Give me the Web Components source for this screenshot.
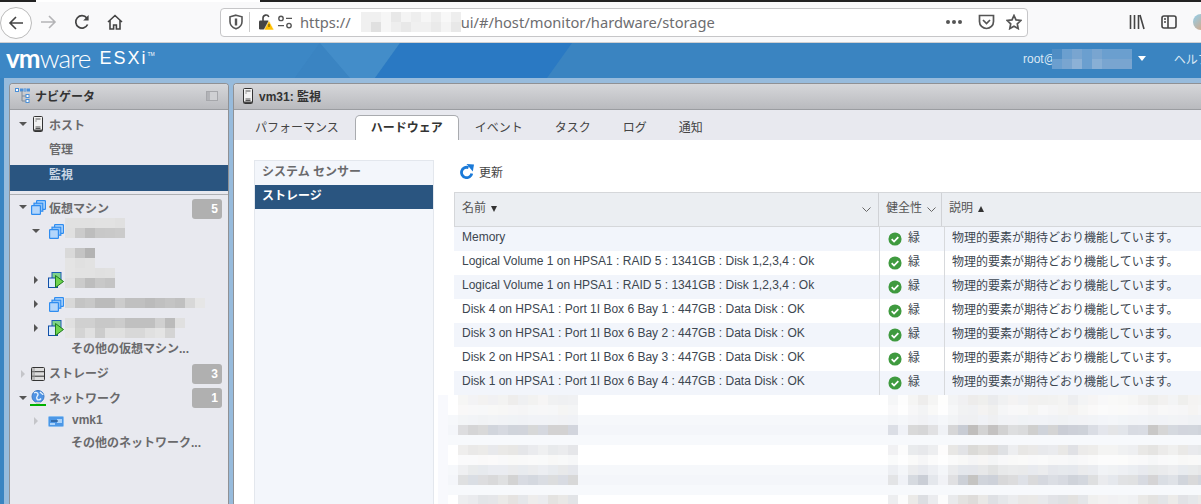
<!DOCTYPE html>
<html lang="ja"><head><meta charset="utf-8"><title>ESXi</title>
<style>
html,body{margin:0;padding:0;width:1201px;height:504px;overflow:hidden;background:#97bbdc;font-family:"Liberation Sans","Noto Sans CJK JP",sans-serif;font-size:12px}
</style></head><body>
<esxi-app></esxi-app>
<script>
const ICONS={
back:'<svg viewBox="0 0 16 16" width="16" height="16" fill="none" stroke="#444" stroke-width="1.6"><path d="M15 8H2M8 2L2 8l6 6"/></svg>',
forward:'<svg viewBox="0 0 16 16" width="16" height="16" fill="none" stroke="#b4b4b6" stroke-width="1.6"><path d="M0 8h14M8 2l6 6-6 6"/></svg>',
reload:'<svg viewBox="0 0 16 16" width="16" height="16" fill="none" stroke="#444" stroke-width="1.7"><path d="M13.6 10.5A6.2 6.2 0 1 1 12.8 4"/><path d="M14.6 1v5.4H9.2z" fill="#444" stroke="none"/></svg>',
home:'<svg viewBox="0 0 16 16" width="16" height="16" fill="none" stroke="#444" stroke-width="1.6"><path d="M1 8l7-6.5L15 8M3 6.5V15h3.6v-4h2.8v4H13V6.5"/></svg>',
shield:'<svg viewBox="0 0 16 16" width="16" height="16" fill="none" stroke="#555" stroke-width="1.6"><path d="M8 1.2l6 1.6v5c0 3.4-2.6 5.8-6 7-3.4-1.2-6-3.6-6-7v-5z"/><path d="M8 4.5v7" stroke-width="2.4"/></svg>',
lock:'<svg viewBox="0 0 16 18" width="16" height="18"><path d="M5 8V5a3 3 0 0 1 5.8-1" fill="none" stroke="#444" stroke-width="1.6"/><rect x="1" y="7.5" width="10" height="9" rx="1.2" fill="#444"/><path d="M11 7.5l5 9.5H6z" fill="#ffbf00" stroke="#fff" stroke-width=".6"/><path d="M11 11v3" stroke="#5a4500" stroke-width="1"/></svg>',
perm:'<svg viewBox="0 0 16 16" width="16" height="16" fill="none" stroke="#555" stroke-width="1.4"><circle cx="4" cy="4.4" r="2.2"/><path d="M9 4.4h6M1 11.6h6"/><circle cx="12" cy="11.6" r="2.2"/></svg>',
pocket:'<svg viewBox="0 0 17 16" width="17" height="16" fill="none" stroke="#555" stroke-width="1.7"><path d="M1.5 1.5h14v6a7 7 0 0 1-14 0z"/><path d="M5 6l3.5 3.5L12 6"/></svg>',
star:'<svg viewBox="0 0 16 16" width="16" height="16" fill="none" stroke="#555" stroke-width="1.7"><path d="M8 1.5l2 4.4 4.8.6-3.5 3.3.9 4.8L8 12.2l-4.200 2.400.9-4.800L1.200 6.500 6 5.900z"/></svg>',
library:'<svg viewBox="0 0 16 16" width="16" height="16" fill="none" stroke="#444" stroke-width="1.6"><path d="M1.500 1v14M5.500 1v14M9.500 1v14M11 1l4 14"/></svg>',
sidebar:'<svg viewBox="0 0 16 16" width="16" height="16" fill="none" stroke="#444" stroke-width="1.6"><rect x="1" y="2" width="14" height="12" rx="2"/><path d="M7 2v12M3 5h2M3 8h2"/></svg>',
tree:'<svg viewBox="0 0 16 16" width="16" height="16" fill="#fff" stroke="#4a90d9" stroke-width="1"><rect x=".5" y=".5" width="3" height="3"/><rect x="5.500" y="1" width="2" height="2"/><rect x="9" y="1" width="2" height="2"/><rect x="12.500" y="1" width="2" height="2"/><path d="M7 3v10h4M7 8h4" fill="none" stroke="#7d8a99"/><rect x="11" y="6.500" width="3" height="3"/><rect x="11" y="11.500" width="3" height="3"/></svg>',
collapse:'<svg viewBox="0 0 12 10" width="12" height="10"><rect x=".5" y=".5" width="11" height="9" fill="#cfd0d3" stroke="#a6a7ab"/><rect x="1" y="1" width="3" height="8" fill="#b2b3b7"/></svg>',
server:'<svg viewBox="0 0 10 16" width="10" height="16"><rect x=".5" y=".5" width="9" height="15" rx="1" fill="#f1f1f1" stroke="#333"/><path d="M2.500 3h5M2.500 5h1M2.500 11h5M2.500 12.500h5" stroke="#555"/><rect x="1" y="13.500" width="8" height="1.500" fill="#444"/></svg>',
vm:'<svg viewBox="0 0 15 15" width="15" height="15"><rect x="5.600" y=".6" width="8.800" height="8.800" rx=".6" fill="#b9dafc" stroke="#2f8df0" stroke-width="1.200"/><rect x="3" y="3.200" width="8.800" height="8" fill="#8fc3f8" stroke="#2f8df0" stroke-width="1.200"/><rect x=".6" y="5.600" width="8.800" height="8.800" rx=".6" fill="#b3d6fb" stroke="#2f8df0" stroke-width="1.200"/></svg>',
vmon:'<svg viewBox="0 0 16 16" width="16" height="16"><rect x="4" y=".5" width="9" height="9" fill="#7fd38a" stroke="#1c5fb4"/><rect x=".5" y="6" width="9" height="9.500" fill="#d9eafc" stroke="#0f4fa8"/><path d="M7.500 3.500l8 6-8 6z" fill="#6fd34e" stroke="#1d7d1d"/></svg>',
storage:'<svg viewBox="0 0 14 14" width="14" height="14"><rect x=".5" y=".5" width="13" height="13" rx="1" fill="#ddd" stroke="#333"/><path d="M1 4.700h12M1 9.200h12" stroke="#333"/><rect x="1" y="1" width="3" height="12" fill="#999" opacity=".5"/></svg>',
globe:'<svg viewBox="0 0 16 16" width="16" height="16"><circle cx="8" cy="6.500" r="6" fill="#4e93e4" stroke="#3a78c4"/><path d="M4 3c2-1.500 4 0 4 1.500S5.500 7 7 9c1 1.500 3 1 4-.5M10 2c1 1 3 2 3 3" fill="none" stroke="#e4f0fc" stroke-width="1.400"/><rect x="6" y="12" width="4" height="2" fill="#ccc"/><rect x="0" y="14" width="16" height="2" fill="#00b000"/></svg>',
nic:'<svg viewBox="0 0 16 11" width="16" height="11"><rect x=".5" y=".5" width="15" height="10" rx="1" fill="#4c97e6" stroke="#88bdf0"/><path d="M2 7h5v2H2zM9 3h5v4H9z" fill="#a9d2fa"/><path d="M3 5h7" stroke="#163e70"/></svg>',
refresh:'<svg viewBox="0 0 14 15" width="14" height="15" fill="none" stroke="#1b7ad8" stroke-width="2.800"><path d="M11.800 9.500A5.200 5.200 0 1 1 8.500 3.600"/><path d="M6.500 0l7.500 .5-1.200 7z" fill="#1b7ad8" stroke="none"/></svg>',
check:'<svg viewBox="0 0 16 16" width="14" height="14"><circle cx="8" cy="8" r="7.500" fill="#3f9a3f"/><path d="M4.200 8.200l2.700 2.700 4.900-5" fill="none" stroke="#fff" stroke-width="2"/></svg>',
chev:'<svg viewBox="0 0 9 5" width="9" height="5" fill="none" stroke="#666" stroke-width="1"><path d="M.5.500l4 4 4-4"/></svg>',
down:'<svg viewBox="0 0 8 4" width="8" height="4"><path d="M0 0h8L4 4z" fill="#555"/></svg>',
right:'<svg viewBox="0 0 4 8" width="4" height="8"><path d="M0 0l4 4-4 4z" fill="#555"/></svg>',
rightlight:'<svg viewBox="0 0 4 8" width="4" height="8"><path d="M0 0l4 4-4 4z" fill="#c4c5c9"/></svg>'
};
function def(name,html,extra){
  class C extends HTMLElement{
    constructor(){super();this.attachShadow({mode:'open'}).innerHTML=html;}
    connectedCallback(){extra&&extra.call(this);}
  }
  customElements.define(name,C);
}
def('x-icon','<style>:host{display:inline-flex;flex:none;line-height:0}</style><span id="s"></span>',function(){this.shadowRoot.getElementById('s').innerHTML=ICONS[this.getAttribute('name')]||'';});

/* mosaic: space separated colours per cell, rows split by | ; -- is see-through; two digits = grey */
def('pixel-mosaic','<style>:host{display:block;line-height:0;pointer-events:none;flex:none}#g{display:grid;grid-auto-rows:10px}#g div{height:10px}</style><div id="g"></div>',function(){
  const g=this.shadowRoot.getElementById('g');let h='';
  const rows=this.getAttribute('data').split('|');const n=Math.max(...rows.map(r=>r.trim().split(/\s+/).length));
  g.style.gridTemplateColumns=`repeat(${n},10px)`;
  rows.forEach(r=>{const c=r.trim().split(/\s+/);for(let i=0;i<n;i++){const v=c[i];h+=(v&&v!='--')?`<div style="background:#${v.length==2?v+v+v:v}"></div>`:'<div></div>';}});
  g.innerHTML=h;
});

def('browser-bar',`<style>
:host{display:block;height:43px;box-sizing:border-box;background:#f9f9fa;border-bottom:1px solid #cfcfd1;position:relative;overflow:hidden}
.strip{display:flex;height:2px;background:#fff}.strip i{display:block}.strip .a{width:36px;background:#222}.strip .b{width:224px}.strip .c{flex:1;background:#222}
.row{display:flex;align-items:center;height:40px}
.circle{width:32px;height:32px;box-sizing:border-box;border:1px solid #bbb;border-radius:50%;background:#fff;display:flex;align-items:center;justify-content:center;margin:1px 0 0 0;flex:none}
.nav{display:flex;align-items:center;gap:17px;margin-left:9px;width:79px;flex:none}
.url{margin-left:100px;width:808px;height:29px;box-sizing:border-box;background:#fff;border:1px solid #c6c6c8;border-radius:4px;display:flex;align-items:center;padding-left:7px;flex:none}
.url .div{width:1px;height:20px;background:#ccc;margin:0 8px 0 5px}
.t{font-family:"Noto Sans",sans-serif;font-size:14.7px;color:#6d6d6f;white-space:nowrap}
.dots{margin-left:auto;width:20px;display:flex;gap:2px}.dots b{width:4px;height:4px;border-radius:50%;background:#555;display:block}
.end{display:flex;align-items:center;gap:11px;margin:0 5px 0 12px}
.tools{display:flex;align-items:center;gap:16px;margin-left:101px}
.ava{width:16px;height:16px;border-radius:50%;background:linear-gradient(135deg,#8fd0ee,#e6a070);flex:none}
</style>
<div class="strip"><i class="a"></i><i class="b"></i><i class="c"></i></div>
<div class="row">
<div class="circle"><x-icon name="back"></x-icon></div>
<div class="nav"><x-icon name="forward"></x-icon><x-icon name="reload"></x-icon><x-icon name="home"></x-icon></div>
<div class="url"><x-icon name="shield"></x-icon><span class="div"></span><x-icon name="lock"></x-icon><span style="width:3px"></span><x-icon name="perm"></x-icon><span style="width:7px"></span>
<span class="t">https://</span><pixel-mosaic data="-- f0 f0 f6 e8 f4 ee f6 ee f8 ee|-- f0 e0 f6 ee e8 f0 f0 ea f4 e8"></pixel-mosaic><span class="t">ui/#/host/monitor/hardware/storage</span>
<span class="dots"><b></b><b></b><b></b></span><span class="end"><x-icon name="pocket"></x-icon><x-icon name="star"></x-icon></span></div>
<div class="tools"><x-icon name="library"></x-icon><x-icon name="sidebar"></x-icon><span class="ava"></span></div>
</div>`);

def('esxi-header',`<style>
:host{display:block;height:35px;position:relative;overflow:hidden;background:#3a84c1;color:#fff}
svg.bg{position:absolute;left:0;top:0}
.row{position:relative;display:flex;align-items:center;height:35px;padding-left:6px;white-space:nowrap}
.vm{font-family:Lato,sans-serif;font-size:26px;letter-spacing:-.9px;line-height:1;font-weight:700;position:relative;top:-3px}
.vm span{font-weight:300}
.esxi{font-family:"Liberation Sans",sans-serif;font-size:18px;letter-spacing:2px;margin-left:9px;position:relative;top:-2px}
.tm{font-size:5px;vertical-align:8px;letter-spacing:0}
.user{margin-left:auto;display:flex;align-items:center;font-size:12px;color:#dbe8f4;width:178px;flex:none;position:relative;top:-2px}
.caret{width:0;height:0;border:4px solid transparent;border-top:5px solid #fff;border-bottom:0;margin:0 14px 0 6px}
.sep{width:1px;height:9px;background:#fff;margin-right:14px}
.help{font-family:"Noto Sans CJK JP",sans-serif}
pixel-mosaic{margin-left:-4px}
</style>
<svg class="bg" width="1201" height="35"><path d="M0 0H320L295 35H0z" fill="#3c87c5"/><path d="M320 0L295 35H350z" fill="#3a84c2"/><path d="M320 0H400L375 35H350z" fill="#438dc9"/><path d="M400 0H572L547 35H375z" fill="#2a79c3"/></svg>
<div class="row"><span class="vm">vm<span>ware</span></span><span class="esxi">ESXi<span class="tm">TM</span></span>
<div class="user">root@<pixel-mosaic data="4f8dc4 6b9fcf 79a5d0 6b9fcf 79a5d0 6b9fcf 6b9fcf 6b9fcf|6b9fcf 79a5d0 8cb1d6 6b9fcf 88afd5 79a5d0 79a5d0 79a5d0"></pixel-mosaic><span class="caret"></span><span class="sep"></span><span class="help">ヘルプ</span></div></div>`);

def('panel-head',`<style>
:host{display:flex;align-items:center;height:26px;box-sizing:border-box;background:linear-gradient(#d6d7da,#b9babe);border-bottom:1px solid #9b9da1;font-weight:bold;font-size:12px;color:#333;padding:0 5px 2px 5px;gap:4px;flex:none}
:host([wide]){padding-left:9px;gap:6px}
.end{margin-left:auto;display:flex}
</style><slot name="icon"></slot><slot></slot><span class="end"><slot name="end"></slot></span>`);

def('count-badge',`<style>:host{display:flex;align-items:center;justify-content:flex-end;box-sizing:border-box;width:30px;height:20px;background:#b0b0b0;border-radius:3px;color:#fff;font-weight:bold;font-size:12px;padding-right:4px;flex:none;position:relative;top:var(--drop,0)}</style><slot></slot>`);

def('tree-row',`<style>
:host{display:flex;align-items:center;height:var(--h,24px);box-sizing:border-box;padding:0 6px 0 9px;font-weight:bold;font-size:12px;color:#6a6a6c;white-space:nowrap;position:relative}
:host([depth="1"]){padding-left:22px}
:host([selected]){background:#2a5580;color:#c9d6e4;height:26px;margin-top:4px;font-weight:bold;padding-bottom:10px}
.a{width:8px;display:flex;justify-content:center;flex:none}
.i{display:flex;justify-content:center;flex:none;width:16px;margin:0 3px 0 3px}
:host([depth="1"]) .i{margin:0 8px 0 8px}
.l{position:relative;top:var(--lift,0)}
.b{margin-left:auto}
</style><span class="a"><slot name="arrow"></slot></span><span class="i"><slot name="icon"></slot></span><span class="l"><slot></slot></span><span class="b"><slot name="badge"></slot></span>`);

def('nav-panel',`<style>
:host{display:flex;flex-direction:column;width:220px;box-sizing:border-box;border:1px solid #8f9195;border-bottom:0;border-radius:4px 4px 0 0;background:#e8e9ef;overflow:hidden;flex:none}
.tree{padding-top:2px;position:relative;flex:1}
.sep{height:1px;background:#aeb0b4;margin-top:3px}
.leaf{display:block;height:25px;line-height:28px;padding-left:39px;font-weight:bold;color:#6a6a6c}
pixel-mosaic{position:absolute}
</style>
<panel-head><x-icon slot="icon" name="tree"></x-icon>ナビゲータ<x-icon slot="end" name="collapse" style="margin-right:5px"></x-icon></panel-head>
<div class="tree">
<tree-row><x-icon slot="arrow" name="down"></x-icon><x-icon slot="icon" name="server"></x-icon>ホスト</tree-row>
<span class="leaf">管理</span>
<tree-row selected>監視</tree-row>
<div class="sep"></div>
<tree-row><x-icon slot="arrow" name="down"></x-icon><x-icon slot="icon" name="vm"></x-icon>仮想マシン<count-badge slot="badge" style="--drop:2px">5</count-badge></tree-row>
<tree-row depth="1"><x-icon slot="arrow" name="down"></x-icon><x-icon slot="icon" name="vm"></x-icon></tree-row>
<tree-row depth="1" style="--h:25px"></tree-row>
<tree-row depth="1"><x-icon slot="arrow" name="right"></x-icon><x-icon slot="icon" name="vmon"></x-icon></tree-row>
<tree-row depth="1"><x-icon slot="arrow" name="right"></x-icon><x-icon slot="icon" name="vm"></x-icon></tree-row>
<tree-row depth="1" style="--h:23px"><x-icon slot="arrow" name="right"></x-icon><x-icon slot="icon" name="vmon"></x-icon></tree-row>
<span class="leaf" style="padding-left:61px;height:20px;line-height:20px">その他の仮想マシン...</span>
<tree-row style="margin-top:3px;--lift:-2px"><x-icon slot="arrow" name="rightlight"></x-icon><x-icon slot="icon" name="storage"></x-icon>ストレージ<count-badge slot="badge">3</count-badge></tree-row>
<tree-row style="--lift:-1px"><x-icon slot="arrow" name="down"></x-icon><x-icon slot="icon" name="globe"></x-icon>ネットワーク<count-badge slot="badge">1</count-badge></tree-row>
<tree-row depth="1" style="--h:22px;--lift:-1px"><x-icon slot="arrow" name="rightlight"></x-icon><x-icon slot="icon" name="nic"></x-icon>vmk1</tree-row>
<span class="leaf" style="padding-left:61px;height:22px;line-height:22px">その他のネットワーク...</span>
<pixel-mosaic style="left:55px;top:108px" data="e1 e1 e1 e2 e2 e0|e0 cb bd c8 c9 cb"></pixel-mosaic>
<pixel-mosaic style="left:55px;top:138px" data="d9 c4 b3|e4 e0 e2"></pixel-mosaic>
<pixel-mosaic style="left:55px;top:158px" data="e4 e2 e2 e0 e1|e0 cb bd c8 c4"></pixel-mosaic>
<pixel-mosaic style="left:55px;top:188px" data="d8 c4 c8 bb bb cc c0 c0 bb c0 c4 c0 d8 e6"></pixel-mosaic>
<pixel-mosaic style="left:55px;top:208px" data="e0 d0 d0 c8 c8 cc c0 c0 c0 d0 bb e0|e6 d4 e0 cc e0 e0 d8 d8 e0 e4 d4"></pixel-mosaic>
</div>`);

def('tab-strip',`<style>
:host{display:flex;height:30px;box-sizing:border-box;background:#e8e9ef;padding:5px 0 0 5px;flex:none;font-size:12px;color:#444}
.t{padding:0 16px;line-height:26px;height:25px;box-sizing:border-box;white-space:nowrap}
.a{background:#fff;border:1px solid #a9abaf;border-bottom:0;border-radius:5px 5px 0 0;font-weight:bold;color:#333;padding:0 15px;line-height:25px}
</style>
<span class="t">パフォーマンス</span><span class="t a">ハードウェア</span><span class="t">イベント</span><span class="t">タスク</span><span class="t">ログ</span><span class="t">通知</span>`);

def('side-list',`<style>
:host{display:block;width:180px;box-sizing:border-box;border:1px solid #e3e7ed;background:#f3f6fb;flex:none;font-size:12px;font-weight:bold;color:#6a6a6c}
div{height:24px;line-height:22px;padding-left:7px}
.s{background:#2a5580;color:#fff;line-height:23px}
</style><div>システム センサー</div><div class="s">ストレージ</div>`);

def('tool-bar',`<style>:host{display:flex;align-items:center;height:32px;padding:0 0 10px 6px;gap:5px;font-size:12px;color:#444;box-sizing:border-box}</style><x-icon name="refresh"></x-icon><span>更新</span>`);

def('hw-row',`<style>
:host{display:grid;grid-template-columns:425px 65px 1fr;height:24px;background:#fff;font-size:12px;color:#3c4650;white-space:nowrap}
:host(:nth-child(odd)){background:#f2f5fb}
.c{display:flex;align-items:center;height:24px;box-sizing:border-box;padding-bottom:4px}
.n{padding-left:8px}
.h{border-left:1px solid #d7d9dc;padding-left:8px;gap:6px;padding-bottom:6px}
.h x-icon{position:relative;top:3px}
.d{border-left:1px solid #d7d9dc;padding-left:7px;padding-bottom:6px}
</style><span class="c n"><slot></slot></span><span class="c h"><x-icon name="check"></x-icon>緑</span><span class="c d">物理的要素が期待どおり機能しています。</span>`);

def('hw-table',`<style>
:host{display:block;margin-right:-30px;font-size:12px}
.head{display:grid;grid-template-columns:423px 63px 1fr;height:35px;box-sizing:border-box;background:#ebeef2;border:1px solid #d5d7da;color:#555;white-space:nowrap}
.head span{display:flex;align-items:center;padding:0 7px 7px;gap:5px;border-left:1px solid #d0d2d6}
.head span:nth-child(2){padding-right:0}
.head span:first-child{border-left:0}
.head .e{margin-left:auto}
.head x-icon{position:relative;top:3px}
.tri{width:0;height:0;border:3.500px solid transparent;margin-top:6px}
.dn{border-top:6px solid #333;border-bottom:0}.up{border-bottom:6px solid #333;border-top:0}
</style>
<div class="head"><span>名前 <i class="tri dn"></i><x-icon class="e" name="chev"></x-icon></span><span>健全性<x-icon name="chev"></x-icon></span><span>説明 <i class="tri up"></i></span></div>
<div><slot></slot></div>`);

def('blur-overlay',`<style>:host{display:block;position:absolute;left:204px;top:311px;width:770px;height:110px;background:#fff;overflow:hidden}svg{display:block}</style><div id="g"></div>`,function(){
  const rows=[[.15,'#fff'],[.10,'#fff'],[.06,'#f6f8fb'],[.40,'#f4f6fa'],[.0,'#f7f9fc'],[.25,'#fff'],[.07,'#fff'],[.16,'#f6f8fb'],[.34,'#f4f6fa'],[.0,'#f7f9fc'],[.27,'#fff']];
  const nameW=[.6,.85,.85,.8,.75,1,1,.8,.75,.9,.85,1];
  const hW=[.0,.55,.1,.75,1,.55,.1];
  const dW=[.6,.9,1,.8,1,.8,.6,.6,.7,.6,.7,.7,.8,.7,.5,.3,.35,.4,.45,.6,.8,.6,.5,.7,.7,.7,.6,.5,.3];
  const rnd=(i,j)=>{const x=Math.sin(i*12.9898+j*78.233)*43758.5453;return x-Math.floor(x);};
  const mix=(b,a,i,j)=>{const v=[0,2,4].map(k=>parseInt(b.length==4?b[1+k/2]+b[1+k/2]:b.substr(1+k,2),16));const t=rnd(i,j);const d=t<.5?[128,122,112]:[112,120,136];const n=a*(.8+.4*rnd(j+3,i+7));return 'rgb('+v.map((x,k)=>Math.round(x+(d[k]-x)*n)).join(',')+')';};
  let s='<svg width="770" height="110" shape-rendering="crispEdges">';
  s+='<rect x="0" width="10" height="110" fill="#f8f9fd"/>';
  rows.forEach((r,j)=>{const y=j*10;s+=`<rect x="10" y="${y}" width="760" height="10" fill="${r[1]}"/>`;
    nameW.forEach((w,i)=>{s+=`<rect x="${20+i*10}" y="${y}" width="10" height="10" fill="${mix(r[1],r[0]*w*.75,i,j)}"/>`});
    hW.forEach((w,i)=>{s+=`<rect x="${440+i*10}" y="${y}" width="10" height="10" fill="${mix(r[1],r[0]*w*.8,i+20,j)}"/>`});
    dW.forEach((w,i)=>{s+=`<rect x="${510+i*10}" y="${y}" width="10" height="10" fill="${mix(r[1],r[0]*w,i+40,j)}"/>`});
  });
  this.shadowRoot.getElementById('g').innerHTML=s+'</svg>';
});

def('main-panel',`<style>
:host{display:flex;flex-direction:column;flex:1;min-width:0;box-sizing:border-box;border:1px solid #8f9195;border-right:0;border-bottom:0;border-radius:4px 0 0 0;background:#fff;overflow:hidden;position:relative}
.body{display:flex;gap:20px;padding:20px 0 0 20px;flex:1;min-height:0}
.right{flex:1;min-width:0;display:flex;flex-direction:column}
side-list{height:400px}
</style>
<panel-head wide><x-icon slot="icon" name="server"></x-icon>vm31: 監視</panel-head>
<tab-strip></tab-strip>
<div class="body"><side-list></side-list><div class="right"><tool-bar></tool-bar><hw-table>
<hw-row>Memory</hw-row><hw-row>Logical Volume 1 on HPSA1 : RAID 5 : 1341GB : Disk 1,2,3,4 : Ok</hw-row><hw-row>Logical Volume 1 on HPSA1 : RAID 5 : 1341GB : Disk 1,2,3,4 : Ok</hw-row><hw-row>Disk 4 on HPSA1 : Port 1I Box 6 Bay 1 : 447GB : Data Disk : OK</hw-row><hw-row>Disk 3 on HPSA1 : Port 1I Box 6 Bay 2 : 447GB : Data Disk : OK</hw-row><hw-row>Disk 2 on HPSA1 : Port 1I Box 6 Bay 3 : 447GB : Data Disk : OK</hw-row><hw-row>Disk 1 on HPSA1 : Port 1I Box 6 Bay 4 : 447GB : Data Disk : OK</hw-row>
</hw-table></div></div>
<blur-overlay></blur-overlay>`);

def('esxi-app',`<style>
:host{display:flex;flex-direction:column;width:1201px;height:504px;overflow:hidden}
.work{flex:1;min-height:0;display:flex;gap:4px;padding:5px 0 0 5px;margin:0;background:#97bbdc;border-left:4px solid #3a84c1}
</style><browser-bar></browser-bar><esxi-header></esxi-header><div class="work"><nav-panel></nav-panel><main-panel></main-panel></div>`);
</script>
</body></html>
